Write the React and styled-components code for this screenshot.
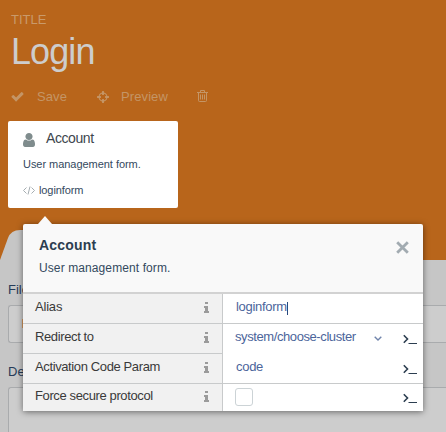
import React from 'react';
import styled, { createGlobalStyle } from 'styled-components';

const Global = createGlobalStyle`
  *, *::before, *::after { box-sizing: border-box; }
  body { margin: 0; background: #c6c6c6; overflow: hidden; font-family: "Liberation Sans", Arial, sans-serif; }
`;
const Page = styled.div`
  position: relative;
  height: 432px;
  overflow: hidden;
`;
const Header = styled.header`
  position: relative;
  height: 260px;
  padding: 12px 8px 0;
  background: #b8651b;
`;
const Eyebrow = styled.div`
  padding-left: 3px;
  font-size: 13px;
  line-height: 16px;
  color: #c99a6b;
`;
const Title = styled.h1`
  margin: 4px 0 0 3px;
  font-size: 36px;
  line-height: 40px;
  font-weight: 400;
  letter-spacing: -0.9px;
  color: #cdcdcd;
`;
const Toolbar = styled.nav`
  display: flex;
  align-items: center;
  height: 17px;
  margin: 16px 0 0 3px;
  color: #c49566;
  font-size: 13px;
  letter-spacing: 0.1px;
`;
const Action = styled.span`
  display: flex;
  align-items: center;
  gap: ${p => p.$gap || 0}px;
  width: ${p => p.$width}px;
`;
const Glyph = styled.svg`
  display: block;
  flex: none;
  width: ${p => p.$w}px;
  height: ${p => p.$h || p.$w}px;
  fill: currentColor;
`;
const TrashGlyph = styled(Glyph)`
  margin-top: -1px;
`;
const Card = styled.section`
  width: 170px;
  height: 87px;
  margin-top: 16px;
  padding: 8px 15px;
  border-radius: 2px;
  background: #fff;
  color: #34495e;
`;
const CardHead = styled.div`
  display: flex;
  align-items: center;
  gap: 11px;
  height: 18px;
  font-size: 14px;
  line-height: 16px;
  letter-spacing: -0.42px;
  color: #3d464d;
`;
const UserGlyph = styled(Glyph)`
  margin-top: 3px;
  color: #7f8c8d;
`;
const CardText = styled.div`
  margin-top: 10px;
  font-size: 11px;
  line-height: 14px;
  letter-spacing: -0.04px;
`;
const CardCode = styled.div`
  display: flex;
  align-items: center;
  gap: 4px;
  margin-top: 12px;
  font-size: 11px;
  line-height: 14px;
  letter-spacing: -0.1px;
`;
const Tab = styled.svg`
  position: absolute;
  left: 0;
  bottom: 0;
  fill: #c6c6c6;
`;
const Form = styled.main`
  padding: 21px 0 0 8px;
`;
const FieldLabel = styled.div`
  height: 24px;
  font-size: 13px;
  line-height: 17px;
  color: #263b58;
`;
const Field = styled.div`
  height: ${p => p.$height}px;
  margin-bottom: 20px;
  border: 1px solid #a9abad;
  border-right: 0;
  border-radius: 3px 0 0 3px;
  background: #cdcdcd;
`;
const Accent = styled.div`
  width: 2px;
  height: 9px;
  margin: 13px 0 0 13px;
  background: #d99a5f;
`;
const Popover = styled.aside`
  position: absolute;
  left: 23px;
  top: 224px;
  width: 400px;
  height: 187px;
  border-radius: 2px;
  background: #f9f9f9;
  box-shadow: 0 1px 6px rgba(0, 0, 0, 0.5);
  &::before {
    content: "";
    position: absolute;
    left: 15px;
    top: -8px;
    border: 7px solid transparent;
    border-top: 0;
    border-bottom: 8px solid #f9f9f9;
  }
`;
const PopHead = styled.div`
  display: flex;
  justify-content: space-between;
  height: 70px;
  padding: 12px 14px 0 16px;
  border-bottom: 2px solid #d2d2d2;
  color: #34495e;
`;
const PopTitle = styled.h2`
  margin: 0;
  font-size: 14px;
  line-height: 18px;
  letter-spacing: 0.2px;
  color: #2c3e50;
`;
const PopText = styled.div`
  margin-top: 6px;
  font-size: 12px;
  line-height: 16px;
  letter-spacing: 0.1px;
`;
const Close = styled(Glyph)`
  margin-top: 5px;
  color: #a2abb1;
`;
const Row = styled.div`
  display: grid;
  grid-template-columns: 200px 1fr;
  height: ${p => p.$height}px;
  background: #fff;
`;
const Label = styled.div`
  display: flex;
  justify-content: space-between;
  padding: ${p => p.$top}px 12px 0 12px;
  border-right: 1px solid #c8cacb;
  border-bottom: ${p => (p.$last ? 0 : 1)}px solid #c8cacb;
  background: #f1f1f1;
  font-size: 13px;
  line-height: 16px;
  letter-spacing: ${p => p.$tracking || -0.38}px;
  color: #3a3a3a;
`;
const InfoGlyph = styled(Glyph)`
  margin-top: 2px;
  color: #9b9b9b;
`;
const Value = styled.div`
  display: flex;
  padding: ${p => p.$top}px 6px 0 ${p => p.$left || 13}px;
  border-bottom: ${p => (p.$line ? 1 : 0)}px solid #c8cacb;
  font-size: 13px;
  line-height: 16px;
  letter-spacing: ${p => p.$tracking || -0.3}px;
  color: #4c659b;
`;
const Caret = styled.span`
  width: 1px;
  height: 13px;
  margin-top: 3px;
  background: #29487d;
`;
const Chevron = styled(Glyph)`
  margin: 7px 0 0 18px;
  fill: none;
  stroke: #7084ab;
  stroke-width: 1.4;
`;
const Prompt = styled(Glyph)`
  margin: 5px 0 0 auto;
  fill: none;
  stroke: #2c3e50;
`;
const Checkbox = styled.span`
  width: 18px;
  height: 18px;
  border: 1px solid #ccd3d6;
  border-radius: 3px;
`;

const CHECK = 'M1671 566q0 40-28 68l-724 724-136 136q-28 28-68 28t-68-28l-136-136-362-362q-28-28-28-68t28-68l136-136q28-28 68-28t68 28l294 295 656-657q28-28 68-28t68 28l136 136q28 28 28 68z';
const TARGET = 'M1325 1024h-109q-26 0-45-19t-19-45v-128q0-26 19-45t45-19h109q-32-108-112.5-188.5t-188.5-112.5v109q0 26-19 45t-45 19h-128q-26 0-45-19t-19-45v-109q-108 32-188.5 112.5t-112.5 188.5h109q26 0 45 19t19 45v128q0 26-19 45t-45 19h-109q32 108 112.5 188.5t188.5 112.5v-109q0-26 19-45t45-19h128q26 0 45 19t19 45v109q108-32 188.5-112.5t112.5-188.5zm339-192v128q0 26-19 45t-45 19h-143q-37 161-154.5 278.5t-278.5 154.5v143q0 26-19 45t-45 19h-128q-26 0-45-19t-19-45v-143q-161-37-278.5-154.5t-154.5-278.5h-143q-26 0-45-19t-19-45v-128q0-26 19-45t45-19h143q37-161 154.5-278.5t278.5-154.5v-143q0-26 19-45t45-19h128q26 0 45 19t19 45v143q161 37 278.5 154.5t154.5 278.5h143q26 0 45 19t19 45z';
const USER = 'M1536 1399q0 109-62.5 187t-150.5 78h-854q-88 0-150.5-78t-62.5-187q0-85 8.5-160.5t31.5-152 58.5-131 94-89 134.5-34.5q131 128 313 128t313-128q76 0 134.5 34.5t94 89 58.5 131 31.5 152 8.5 160.5zm-256-887q0 159-112.5 271.5t-271.5 112.5-271.5-112.5-112.5-271.5 112.5-271.5 271.5-112.5 271.5 112.5 112.5 271.5z';

const InfoIcon = () => (
  <InfoGlyph $w={7} $h={13} viewBox="0 0 7 13">
    <path d="M2 1h3v2H2zM1 5h4v5h1v2H1v-2h1V7H1z" />
  </InfoGlyph>
);
const PromptIcon = () => (
  <Prompt $w={14} $h={12} viewBox="0 0 14 12">
    <path d="M.8 1.3l3.7 3.7L.8 8.7" strokeWidth="1.6" /><path d="M5.5 9.5H14" strokeWidth="1" />
  </Prompt>
);

export default function App() {
  return (
    <Page>
      <Global />
      <Header>
        <Eyebrow>TITLE</Eyebrow>
        <Title>Login</Title>
        <Toolbar>
          <Action $gap={13} $width={86}>
            <Glyph $w={13} viewBox="64 64 1664 1664"><path d={CHECK} /></Glyph>Save
          </Action>
          <Action $gap={12} $width={100}>
            <Glyph $w={12} viewBox="128 128 1536 1536"><path d={TARGET} /></Glyph>Preview
          </Action>
          <Action $width={11}>
            <TrashGlyph $w={11} $h={12} viewBox="0 0 11 12">
              <path d="M0 2.5h11M3.5 2.5V.5h4v2M1.5 2.5v8q0 1 1 1h6q1 0 1-1v-8M3.5 4.5v5M5.5 4.5v5M7.5 4.5v5" fill="none" stroke="currentColor" />
            </TrashGlyph>
          </Action>
        </Toolbar>
        <Card>
          <CardHead>
            <UserGlyph $w={12} $h={14} viewBox="256 128 1280 1536" preserveAspectRatio="none"><path d={USER} /></UserGlyph>
            Account
          </CardHead>
          <CardText>User management form.</CardText>
          <CardCode>
            <Glyph $w={12} $h={9} viewBox="0 0 12 9">
              <path d="M3.5 1.5l-3 3 3 3M8.5 1.5l3 3-3 3M7 .5L5 8.5" fill="none" stroke="#a5adb1" />
            </Glyph>
            loginform
          </CardCode>
        </Card>
        <Tab width="60" height="30" viewBox="0 0 60 30"><path d="M0 30L8 8Q11 0 20 0H60V30Z" /></Tab>
      </Header>
      <Form>
        <FieldLabel>File</FieldLabel>
        <Field $height={38}><Accent /></Field>
        <FieldLabel>De</FieldLabel>
        <Field $height={80} />
      </Form>
      <Popover>
        <PopHead>
          <div>
            <PopTitle>Account</PopTitle>
            <PopText>User management form.</PopText>
          </div>
          <Close $w={13} viewBox="0 0 13 13"><path d="M1.2 1.2l10.6 10.6M11.8 1.2L1.2 11.8" stroke="currentColor" strokeWidth="2.8" /></Close>
        </PopHead>
        <Row $height={30}>
          <Label $top={5} $tracking={-0.2}>Alias<InfoIcon /></Label>
          <Value $top={5} $line>loginform<Caret /></Value>
        </Row>
        <Row $height={30}>
          <Label $top={5}>Redirect to<InfoIcon /></Label>
          <Value $top={5} $left={12} $tracking={-0.41}>system/choose-cluster
            <Chevron $w={8} $h={5} viewBox="0 0 8 5"><path d="M.7.7L4 4 7.3.7" /></Chevron>
            <PromptIcon />
          </Value>
        </Row>
        <Row $height={30}>
          <Label $top={5}>Activation Code Param<InfoIcon /></Label>
          <Value $top={5} $line>code<PromptIcon /></Value>
        </Row>
        <Row $height={27}>
          <Label $top={4} $last>Force secure protocol<InfoIcon /></Label>
          <Value $top={4} $left={12}><Checkbox /><PromptIcon /></Value>
        </Row>
      </Popover>
    </Page>
  );
}
